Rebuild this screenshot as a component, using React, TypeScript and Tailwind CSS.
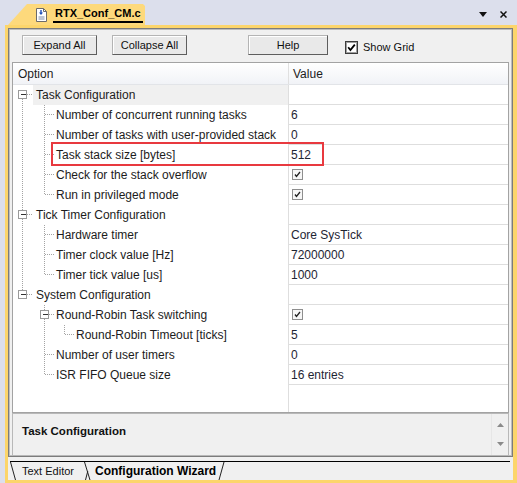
import React from "react";

type Row = {
  label: string;
  depth: 0 | 1 | 2;
  value?: string;
  check?: boolean;
  exp?: boolean;
  first?: boolean;
  lastGroup?: boolean;
  inGroup?: boolean;
  lastChild?: boolean;
  selected?: boolean;
};

const rows: Row[] = [
  { label: "Task Configuration", depth: 0, exp: true, first: true, selected: true },
  { label: "Number of concurrent running tasks", depth: 1, value: "6", inGroup: true },
  { label: "Number of tasks with user-provided stack", depth: 1, value: "0", inGroup: true },
  { label: "Task stack size [bytes]", depth: 1, value: "512", inGroup: true },
  { label: "Check for the stack overflow", depth: 1, check: true, inGroup: true },
  { label: "Run in privileged mode", depth: 1, check: true, inGroup: true, lastChild: true },
  { label: "Tick Timer Configuration", depth: 0, exp: true },
  { label: "Hardware timer", depth: 1, value: "Core SysTick", inGroup: true },
  { label: "Timer clock value [Hz]", depth: 1, value: "72000000", inGroup: true },
  { label: "Timer tick value [us]", depth: 1, value: "1000", inGroup: true, lastChild: true },
  { label: "System Configuration", depth: 0, exp: true, lastGroup: true },
  { label: "Round-Robin Task switching", depth: 1, check: true, exp: true },
  { label: "Round-Robin Timeout [ticks]", depth: 2, value: "5", lastChild: true },
  { label: "Number of user timers", depth: 1, value: "0" },
  { label: "ISR FIFO Queue size", depth: 1, value: "16 entries", lastChild: true },
];

const dot = {
  stroke: "#a3a3a3",
  strokeWidth: 1,
  strokeDasharray: "1 1",
  shapeRendering: "crispEdges" as const,
};

function Expander({ cx }: { cx: number }) {
  return (
    <g shapeRendering="crispEdges">
      <rect x={cx - 4} y={5.5} width={8} height={8} fill="#fff" stroke="#9a9a9a" />
      <line x1={cx - 2} y1={9.5} x2={cx + 3} y2={9.5} stroke="#333" />
    </g>
  );
}

// tree lines drawn in page x coordinates (grid content starts at x 13)
function Tree({ r }: { r: Row }) {
  const labelX = r.depth === 0 ? 33 : r.depth === 1 ? 55 : 75;
  const w = labelX - 13;
  return (
    <svg width={w} height={20} viewBox={`13 0 ${w} 20`} className="shrink-0">
      {r.depth === 0 && (
        <>
          {!r.first && <line x1={22.5} y1={0} x2={22.5} y2={5} {...dot} />}
          {!r.lastGroup && <line x1={22.5} y1={14} x2={22.5} y2={20} {...dot} />}
          <line x1={27} y1={9.5} x2={33} y2={9.5} {...dot} />
          <Expander cx={22.5} />
        </>
      )}
      {r.depth === 1 && (
        <>
          {r.inGroup && <line x1={22.5} y1={0} x2={22.5} y2={20} {...dot} />}
          {r.exp ? (
            <>
              <line x1={44.5} y1={0} x2={44.5} y2={5} {...dot} />
              <line x1={44.5} y1={14} x2={44.5} y2={20} {...dot} />
              <line x1={49} y1={9.5} x2={55} y2={9.5} {...dot} />
              <Expander cx={44.5} />
            </>
          ) : (
            <>
              <line x1={44.5} y1={0} x2={44.5} y2={r.lastChild ? 10 : 20} {...dot} />
              <line x1={45} y1={9.5} x2={55} y2={9.5} {...dot} />
            </>
          )}
        </>
      )}
      {r.depth === 2 && (
        <>
          <line x1={44.5} y1={0} x2={44.5} y2={20} {...dot} />
          <line x1={64.5} y1={0} x2={64.5} y2={10} {...dot} />
          <line x1={65} y1={9.5} x2={75} y2={9.5} {...dot} />
        </>
      )}
    </svg>
  );
}

function SmallCheck() {
  return (
    <svg width={11} height={11} viewBox="0 0 11 11">
      <rect x={0.5} y={0.5} width={10} height={10} fill="#f6f6f6" stroke="#8e8e8e" shapeRendering="crispEdges" />
      <path d="M3 5.5 L4.5 7.5 L8 3" fill="none" stroke="#222" strokeWidth={1.3} />
    </svg>
  );
}

function Button({ label, w }: { label: string; w: string }) {
  return (
    <div
      className={`${w} flex h-[20px] items-center justify-center border border-[#b4b4b4] border-r-[#5e5e5e] border-b-[#5e5e5e] bg-[#e9e9e9] text-[11px] text-[#111] shadow-[inset_1px_1px_0_#ffffff]`}
    >
      {label}
    </div>
  );
}

export default function App() {
  return (
    <div className="flex h-[483px] w-[517px] flex-col overflow-hidden bg-[#dcdfec] font-['Liberation_Sans',Arial,sans-serif] text-[#1c1c1c]">
      {/* top tab bar */}
      <div className="flex h-[25px] shrink-0 items-end">
        <div className="ml-[8px] flex h-[21px] w-[137px] items-center bg-[#fdd97c] [clip-path:polygon(0_100%,19px_0,135px_0,137px_2px,137px_100%)]">
          <svg width={11} height={14} viewBox="0 0 11 14" className="ml-[28px]">
            <path d="M0.5 0.5 H7.5 L10.5 3.5 V13.5 H0.5 Z" fill="#fff" stroke="#6b6b6b" />
            <path d="M7.5 0.5 V3.5 H10.5" fill="none" stroke="#6b6b6b" />
            <path d="M5 2 V6" stroke="#1f4fb8" strokeWidth={1.4} />
            <path d="M3 4.5 L5 7 L7 4.5 Z" fill="#1f4fb8" />
            <path d="M2.5 9 H8.5 M2.5 11 H8.5" stroke="#7a8aa8" />
          </svg>
          <span className="ml-[6px] border-b-[2px] border-black px-[2px] text-[11px] leading-[15px] font-bold text-black">
            RTX_Conf_CM.c
          </span>
        </div>
        <div className="flex-1" />
        <div className="mb-[7px] flex items-center gap-[13px] pr-[10px]">
          <svg width={8} height={5} viewBox="0 0 8 5">
            <path d="M0 0 H8 L4 5 Z" fill="#111" />
          </svg>
          <svg width={7} height={7} viewBox="0 0 7 7">
            <path d="M0.5 0.5 L6.5 6.5 M6.5 0.5 L0.5 6.5" stroke="#111" strokeWidth={1.5} />
          </svg>
        </div>
      </div>

      {/* yellow frame */}
      <div className="ml-[5px] flex flex-1 flex-col border-t-[3px] border-r-[4px] border-b-[3px] border-l-[3px] border-[#fcd56b] bg-[#f0f0f0]">
        {/* view box */}
        <div className="flex h-[429px] shrink-0 flex-col border border-[#7c7c7c] px-[3px] shadow-[inset_0_0_0_1px_#bdbdbd]">
          {/* toolbar */}
          <div className="flex h-[33px] shrink-0 items-start pt-[6px] pl-[10px]">
            <Button label="Expand All" w="w-[75px]" />
            <div className="w-[15px]" />
            <Button label="Collapse All" w="w-[75px]" />
            <div className="w-[61px]" />
            <Button label="Help" w="w-[80px]" />
            <div className="ml-[17px] mt-[4px] flex items-center">
              <svg width={13} height={13} viewBox="0 0 13 13">
                <rect x={0.5} y={0.5} width={12} height={12} fill="#fff" stroke="#3c3c3c" shapeRendering="crispEdges" />
                <rect x={1.5} y={1.5} width={10} height={10} fill="none" stroke="#a0a0a0" shapeRendering="crispEdges" />
                <path d="M3.2 6.3 L5.4 9 L9.8 3.6" fill="none" stroke="#000" strokeWidth={1.8} />
              </svg>
              <span className="ml-[5px] text-[11px] text-[#111]">Show Grid</span>
            </div>
          </div>

          {/* property grid */}
          <div className="flex h-[351px] shrink-0 flex-col border border-[#a3a3a3] bg-white text-[12px]">
            <div className="flex h-[22px] shrink-0 border-b border-[#e2e4e8] bg-linear-to-b from-white to-[#f1f3f7]">
              <div className="flex w-[275px] items-center pl-[5px]">Option</div>
              <div className="flex flex-1 items-center border-l border-[#e0e0e0] pl-[4px]">Value</div>
            </div>
            <div className="relative flex flex-1 flex-col">
              {rows.map((r) => (
                <div key={r.label} className="flex h-[20px] shrink-0">
                  <div className="flex w-[275px] items-center">
                    <Tree r={r} />
                    <div
                      className={`flex h-full flex-1 items-center whitespace-nowrap ${
                        r.depth === 0 ? "pl-[3px]" : "pl-[1px]"
                      } ${r.selected ? "bg-[#f0f0f0]" : ""}`}
                    >
                      {r.label}
                    </div>
                  </div>
                  <div className="flex flex-1 items-center border-b border-l border-[#dedede] pl-[2px] text-[#1e2533]">
                    {r.check ? (
                      <span className="ml-[1px] flex">
                        <SmallCheck />
                      </span>
                    ) : (
                      r.value
                    )}
                  </div>
                </div>
              ))}
              <div className="flex flex-1">
                <div className="w-[275px]" />
                <div className="flex-1 border-l border-[#dedede]" />
              </div>
              {/* annotation box */}
              <div className="pointer-events-none absolute top-[57px] left-[38px] h-[24px] w-[273px] border-2 border-[#e8393f]" />
            </div>
          </div>

          {/* description */}
          <div className="flex h-[43px] shrink-0 border border-[#b8b8b8] bg-[#f0f0f0]">
            <div className="flex-1 pt-[10px] pl-[9px] text-[11.5px] leading-[14px] font-bold text-[#111]">
              Task Configuration
            </div>
            <div className="flex w-[17px] flex-col items-center justify-between border-l border-[#e6e6e6] py-[9px]">
              <svg width={7} height={4} viewBox="0 0 7 4">
                <path d="M0 4 L3.5 0 L7 4 Z" fill="#8a8a8a" />
              </svg>
              <svg width={7} height={4} viewBox="0 0 7 4">
                <path d="M0 0 L3.5 4 L7 0 Z" fill="#8a8a8a" />
              </svg>
            </div>
          </div>
        </div>

        {/* bottom tabs */}
        <div className="mt-[4px] mr-[3px] ml-[2px] flex h-[19px] items-stretch border-t border-black text-[11px] leading-[18px]">
          <svg width={7} height={18} viewBox="0 0 7 18" className="shrink-0">
            <path d="M0.5 0 L5.5 18" stroke="#222" fill="none" />
          </svg>
          <span className="ml-[5px] text-[#111]">Text Editor</span>
          <div className="w-[10px]" />
          <svg width={10} height={18} viewBox="0 0 10 18" className="shrink-0">
            <path d="M0.5 0 L6 18" stroke="#222" fill="none" />
            <path d="M3.8 9 L1.5 18" stroke="#222" fill="none" />
          </svg>
          <span className="ml-[1px] text-[12px] font-bold text-black">Configuration Wizard</span>
          <svg width={10} height={18} viewBox="0 0 10 18" className="shrink-0">
            <path d="M8 0 L3 18" stroke="#222" fill="none" />
          </svg>
        </div>
      </div>
    </div>
  );
}
